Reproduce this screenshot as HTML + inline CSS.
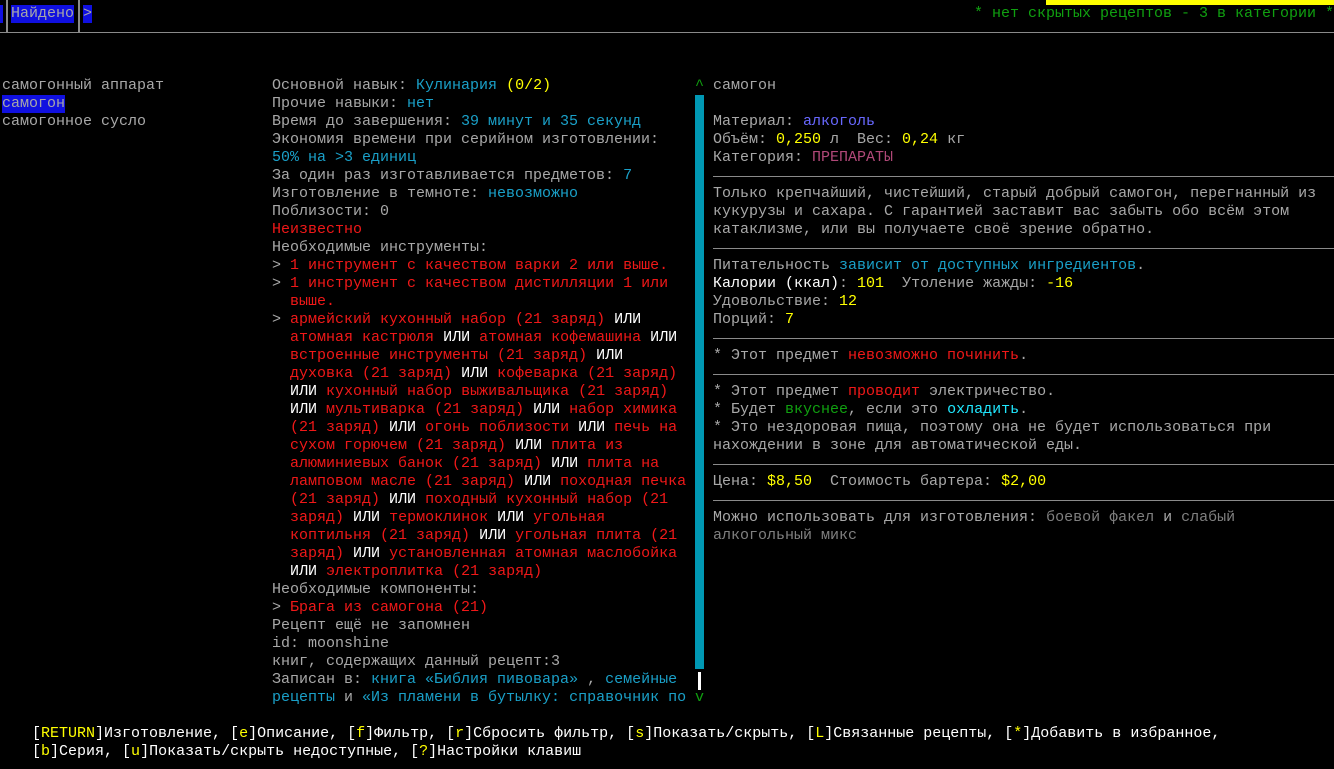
<!DOCTYPE html>
<html><head><meta charset="utf-8"><style>
html,body{margin:0;padding:0;background:#000;width:1334px;height:769px;overflow:hidden;position:relative}
body{font-family:"Liberation Mono","DejaVu Sans Mono",monospace;font-size:15px;line-height:18px;color:#a8a8a8}
.l{position:absolute;white-space:pre;height:18px}
.c{color:#1aa0c8}.y{color:#ffff00}.r{color:#f01818}.w{color:#fff}.b{color:#6868ff}.m{color:#b04878}.g{color:#10a010}.bc{color:#20e8ff}.d{color:#808080}
.hr{position:absolute;height:1px;background:#8a8a8a}
.vr{position:absolute;width:2px;background:#8a8a8a}
</style></head><body>
<div style="position:absolute;left:1046px;top:0;width:288px;height:5px;background:#ffff00"></div>
<div class="l" style="left:0;top:5px;width:3px;background:#1010e0"></div>
<div class="vr" style="left:6px;top:0;height:33px"></div>
<div class="l" style="left:11px;top:5px;background:#1010e0">Найдено</div>
<div class="vr" style="left:78px;top:0;height:33px"></div>
<div class="l" style="left:83px;top:5px;background:#1010e0">&gt;</div>
<div class="l g" style="left:974px;top:5px">* нет скрытых рецептов - 3 в категории *</div>
<div class="hr" style="left:0;top:32px;width:1334px;height:1px"></div>

<div class="l" style="left:2px;top:77px">самогонный аппарат</div>
<div class="l" style="left:2px;top:95px;background:#1010e0">самогон</div>
<div class="l" style="left:2px;top:113px">самогонное сусло</div>

<div style="position:absolute;left:272px;top:77px">
<div class="l" style="position:relative">Основной навык: <span class="c">Кулинария</span> <span class="y">(0/2)</span></div>
<div class="l" style="position:relative">Прочие навыки: <span class="c">нет</span></div>
<div class="l" style="position:relative">Время до завершения: <span class="c">39 минут и 35 секунд</span></div>
<div class="l" style="position:relative">Экономия времени при серийном изготовлении:</div>
<div class="l" style="position:relative"><span class="c">50% на &gt;3 единиц</span></div>
<div class="l" style="position:relative">За один раз изготавливается предметов: <span class="c">7</span></div>
<div class="l" style="position:relative">Изготовление в темноте: <span class="c">невозможно</span></div>
<div class="l" style="position:relative">Поблизости: 0</div>
<div class="l r" style="position:relative">Неизвестно</div>
<div class="l" style="position:relative">Необходимые инструменты:</div>
<div class="l" style="position:relative">&gt; <span class="r">1 инструмент с качеством варки 2 или выше.</span></div>
<div class="l" style="position:relative">&gt; <span class="r">1 инструмент с качеством дистилляции 1 или</span></div>
<div class="l r" style="position:relative">  выше.</div>
<div class="l" style="position:relative">&gt; <span class="r">армейский кухонный набор (21 заряд)</span> <span class="w">ИЛИ</span></div>
<div class="l" style="position:relative">  <span class="r">атомная кастрюля</span> <span class="w">ИЛИ</span> <span class="r">атомная кофемашина</span> <span class="w">ИЛИ</span></div>
<div class="l" style="position:relative">  <span class="r">встроенные инструменты (21 заряд)</span> <span class="w">ИЛИ</span></div>
<div class="l" style="position:relative">  <span class="r">духовка (21 заряд)</span> <span class="w">ИЛИ</span> <span class="r">кофеварка (21 заряд)</span></div>
<div class="l" style="position:relative">  <span class="w">ИЛИ</span> <span class="r">кухонный набор выживальщика (21 заряд)</span></div>
<div class="l" style="position:relative">  <span class="w">ИЛИ</span> <span class="r">мультиварка (21 заряд)</span> <span class="w">ИЛИ</span> <span class="r">набор химика</span></div>
<div class="l" style="position:relative">  <span class="r">(21 заряд)</span> <span class="w">ИЛИ</span> <span class="r">огонь поблизости</span> <span class="w">ИЛИ</span> <span class="r">печь на</span></div>
<div class="l" style="position:relative">  <span class="r">сухом горючем (21 заряд)</span> <span class="w">ИЛИ</span> <span class="r">плита из</span></div>
<div class="l" style="position:relative">  <span class="r">алюминиевых банок (21 заряд)</span> <span class="w">ИЛИ</span> <span class="r">плита на</span></div>
<div class="l" style="position:relative">  <span class="r">ламповом масле (21 заряд)</span> <span class="w">ИЛИ</span> <span class="r">походная печка</span></div>
<div class="l" style="position:relative">  <span class="r">(21 заряд)</span> <span class="w">ИЛИ</span> <span class="r">походный кухонный набор (21</span></div>
<div class="l" style="position:relative">  <span class="r">заряд)</span> <span class="w">ИЛИ</span> <span class="r">термоклинок</span> <span class="w">ИЛИ</span> <span class="r">угольная</span></div>
<div class="l" style="position:relative">  <span class="r">коптильня (21 заряд)</span> <span class="w">ИЛИ</span> <span class="r">угольная плита (21</span></div>
<div class="l" style="position:relative">  <span class="r">заряд)</span> <span class="w">ИЛИ</span> <span class="r">установленная атомная маслобойка</span></div>
<div class="l" style="position:relative">  <span class="w">ИЛИ</span> <span class="r">электроплитка (21 заряд)</span></div>
<div class="l" style="position:relative">Необходимые компоненты:</div>
<div class="l" style="position:relative">&gt; <span class="r">Брага из самогона (21)</span></div>
<div class="l" style="position:relative">Рецепт ещё не запомнен</div>
<div class="l" style="position:relative">id: moonshine</div>
<div class="l" style="position:relative">книг, содержащих данный рецепт:3</div>
<div class="l" style="position:relative">Записан в: <span class="c">книга «Библия пивовара»</span> , <span class="c">семейные</span></div>
<div class="l" style="position:relative"><span class="c">рецепты</span> и <span class="c">«Из пламени в бутылку: справочник по</span></div>
</div>

<div class="l g" style="left:695px;top:77px">^</div>
<div style="position:absolute;left:695px;top:95px;width:9px;height:574px;background:#0098b4"></div>
<div style="position:absolute;left:698px;top:672px;width:3px;height:18px;background:#fff"></div>
<div class="l g" style="left:695px;top:689px">v</div>

<div class="l" style="left:713px;top:77px">самогон</div>
<div class="l" style="left:713px;top:113px">Материал: <span class="b">алкоголь</span></div>
<div class="l" style="left:713px;top:131px">Объём: <span class="y">0,250</span> л  Вес: <span class="y">0,24</span> кг</div>
<div class="l" style="left:713px;top:149px">Категория: <span class="m">ПРЕПАРАТЫ</span></div>
<div class="hr" style="left:713px;top:176px;width:621px"></div>
<div class="l" style="left:713px;top:185px">Только крепчайший, чистейший, старый добрый самогон, перегнанный из</div>
<div class="l" style="left:713px;top:203px">кукурузы и сахара. С гарантией заставит вас забыть обо всём этом</div>
<div class="l" style="left:713px;top:221px">катаклизме, или вы получаете своё зрение обратно.</div>
<div class="hr" style="left:713px;top:248px;width:621px"></div>
<div class="l" style="left:713px;top:257px">Питательность <span class="c">зависит от доступных ингредиентов</span>.</div>
<div class="l" style="left:713px;top:275px"><span class="w">Калории (ккал)</span>: <span class="y">101</span>  Утоление жажды: <span class="y">-16</span></div>
<div class="l" style="left:713px;top:293px">Удовольствие: <span class="y">12</span></div>
<div class="l" style="left:713px;top:311px">Порций: <span class="y">7</span></div>
<div class="hr" style="left:713px;top:338px;width:621px"></div>
<div class="l" style="left:713px;top:347px">* Этот предмет <span class="r">невозможно починить</span>.</div>
<div class="hr" style="left:713px;top:374px;width:621px"></div>
<div class="l" style="left:713px;top:383px">* Этот предмет <span class="r">проводит</span> электричество.</div>
<div class="l" style="left:713px;top:401px">* Будет <span style="color:#10a010">вкуснее</span>, если это <span class="bc">охладить</span>.</div>
<div class="l" style="left:713px;top:419px">* Это нездоровая пища, поэтому она не будет использоваться при</div>
<div class="l" style="left:713px;top:437px">нахождении в зоне для автоматической еды.</div>
<div class="hr" style="left:713px;top:464px;width:621px"></div>
<div class="l" style="left:713px;top:473px">Цена: <span class="y">$8,50</span>  Стоимость бартера: <span class="y">$2,00</span></div>
<div class="hr" style="left:713px;top:500px;width:621px"></div>
<div class="l" style="left:713px;top:509px">Можно использовать для изготовления: <span class="d">боевой факел</span> и <span class="d">слабый</span></div>
<div class="l d" style="left:713px;top:527px">алкогольный микс</div>

<div class="l w" style="left:32px;top:725px">[<span class="y">RETURN</span>]Изготовление, [<span class="y">e</span>]Описание, [<span class="y">f</span>]Фильтр, [<span class="y">r</span>]Сбросить фильтр, [<span class="y">s</span>]Показать/скрыть, [<span class="y">L</span>]Связанные рецепты, [<span class="y">*</span>]Добавить в избранное,</div>
<div class="l w" style="left:32px;top:743px">[<span class="y">b</span>]Серия, [<span class="y">u</span>]Показать/скрыть недоступные, [<span class="y">?</span>]Настройки клавиш</div>
</body></html>
